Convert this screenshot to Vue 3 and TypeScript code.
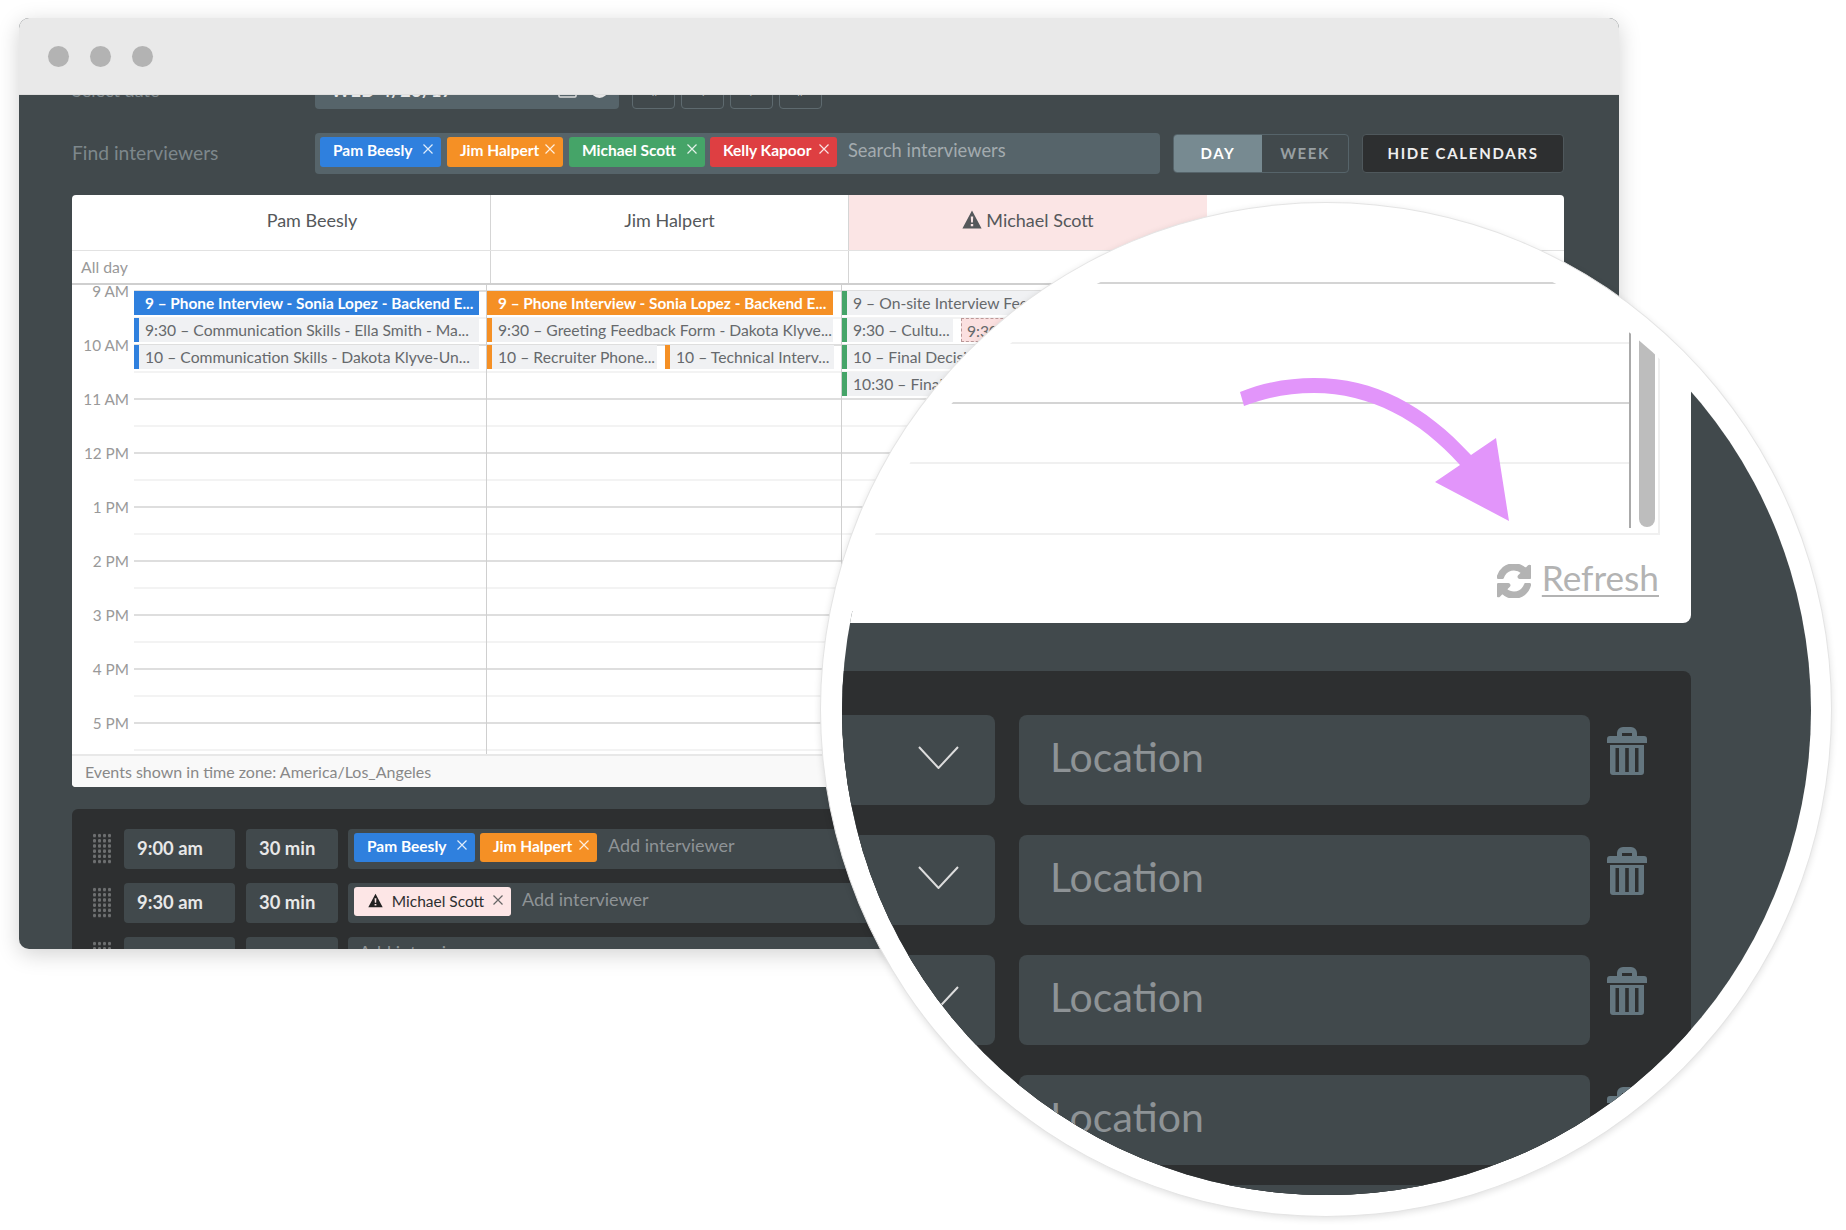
<script setup lang="ts">
interface Chip { name: string; color: string }
interface Ev { text: string; kind: string; width?: number }

const topChips: Chip[] = [
  { name: 'Pam Beesly', color: 'blue' },
  { name: 'Jim Halpert', color: 'orange' },
  { name: 'Michael Scott', color: 'green' },
  { name: 'Kelly Kapoor', color: 'red' },
]
const hours = ['9 AM', '10 AM', '11 AM', '12 PM', '1 PM', '2 PM', '3 PM', '4 PM', '5 PM']
const col1: Ev[][] = [
  [{ text: '9 – Phone Interview - Sonia Lopez - Backend E...', kind: 'solid blue' }],
  [{ text: '9:30 – Communication Skills - Ella Smith - Ma...', kind: 'bar blue' }],
  [{ text: '10 – Communication Skills - Dakota Klyve-Un...', kind: 'bar blue' }],
]
const col2: Ev[][] = [
  [{ text: '9 – Phone Interview - Sonia Lopez - Backend E...', kind: 'solid orange' }],
  [{ text: '9:30 – Greeting Feedback Form - Dakota Klyve...', kind: 'bar orange' }],
  [
    { text: '10 – Recruiter Phone...', kind: 'bar orange', width: 170 },
    { text: '10 – Technical Interv...', kind: 'bar orange', width: 169 },
  ],
]
const col3: Ev[][] = [
  [{ text: '9 – On-site Interview Feedback', kind: 'bar green' }],
  [
    { text: '9:30 – Cultu...', kind: 'bar green', width: 111 },
    { text: '9:30 – Hold', kind: 'hold', width: 111 },
  ],
  [{ text: '10 – Final Decision', kind: 'bar green' }],
  [{ text: '10:30 – Final Review', kind: 'bar green' }],
]
const schedule = [
  { time: '9:00 am', chips: [topChips[0], topChips[1]] as Chip[], warn: false },
  { time: '9:30 am', chips: [] as Chip[], warn: true },
  { time: '10:00 am', chips: [] as Chip[], warn: false },
]
const lensRows = [1, 2, 3, 4]
const arrow =
  'M1240 392C1265 382 1290 378 1314 378C1375 378 1425 405 1471 455L1496 438L1509 521L1435 482L1460 465C1420 420 1370 393 1314 393C1290 393 1268 397 1244 406Z'
const refresh =
  'M1639 1056q0 5-1 7-64 268-268 434.5t-478 166.5q-146 0-282.5-55t-243.5-157l-129 129q-19 19-45 19t-45-19-19-45v-448q0-26 19-45t45-19h448q26 0 45 19t19 45-19 45l-137 137q71 66 161 102t187 36q134 0 250-65t186-179q11-17 53-117 8-23 30-23h192q13 0 22.5 9.5t9.5 22.5zm25-800v448q0 26-19 45t-45 19h-448q-26 0-45-19t-19-45 19-45l138-138q-148-137-349-137-134 0-250 65t-186 179q-11 17-53 117-8 23-30 23h-199q-13 0-22.5-9.5t-9.5-22.5v-7q65-268 270-434.5t480-166.5q146 0 284 55.5t245 156.5l130-129q19-19 45-19t45 19 19 45z'
const warnPath = 'M10 0.5L19.6 18.5H0.4ZM8.8 6.5H11.2L10.9 12.5H9.1ZM8.8 14H11.2V16.3H8.8Z'
const trash =
  'M10 9V6a6 6 0 0 1 6-6h8a6 6 0 0 1 6 6v3h7a3 3 0 0 1 3 3v4H0v-4a3 3 0 0 1 3-3zM15 6v3h10V6zM3 18H37V45a3 3 0 0 1-3 3H6a3 3 0 0 1-3-3zM8.5 21V45H12V21zM18.2 21V45H21.8V21zM28 21V45H31.5V21z'
</script>

<template>
  <div class="page">
    <div class="window">
      <div class="titlebar">
        <span class="dot"></span><span class="dot"></span><span class="dot"></span>
      </div>
      <div class="body">
        <div class="clipped-row">
          <div class="row-label cut">Select date</div>
          <div class="date-field">
            <span>WED 4/26/17</span>
            <span class="date-icons">
              <svg width="19" height="14" viewBox="0 0 19 14"><rect x="1" y="1" width="17" height="12" rx="1" fill="none" stroke="#ddd" stroke-width="1.5" /></svg>
              <i class="clock"></i>
            </span>
          </div>
          <div class="nav-btns">
            <span class="nav-btn">«</span><span class="nav-btn">‹</span><span class="nav-btn">›</span><span class="nav-btn">»</span>
          </div>
        </div>

        <div class="find-row">
          <div class="row-label">Find interviewers</div>
          <div class="chip-bar">
            <span v-for="c in topChips" :key="c.name" class="chip" :class="c.color">
              {{ c.name }}
              <svg class="x" width="10" height="10" viewBox="0 0 10 10"><path d="M0.5 0.5L9.5 9.5M9.5 0.5L0.5 9.5" /></svg>
            </span>
            <span class="search-ph">Search interviewers</span>
          </div>
          <div class="toggle">
            <span class="tog on">DAY</span><span class="tog">WEEK</span>
          </div>
          <div class="hide-btn">HIDE CALENDARS</div>
        </div>

        <div class="calendar">
          <div class="cal-head">
            <div class="hc h1">Pam Beesly</div>
            <div class="hc h2">Jim Halpert</div>
            <div class="hc h3">
              <svg width="20" height="19" viewBox="0 0 20 19"><path :d="warnPath" fill="#55585b" fill-rule="evenodd" /></svg>
              Michael Scott
            </div>
          </div>
          <div class="cal-allday">
            <div class="ad a1">All day</div>
            <div class="ad a2"></div>
            <div class="ad a3"></div>
          </div>
          <div class="cal-grid">
            <div class="times">
              <div v-for="h in hours" :key="h" class="time">{{ h }}</div>
            </div>
            <div class="lanes">
              <div class="lane l1">
                <div v-for="(row, i) in col1" :key="i" class="ev-row">
                  <div v-for="e in row" :key="e.text" class="ev" :class="e.kind">{{ e.text }}</div>
                </div>
              </div>
              <div class="lane l2">
                <div v-for="(row, i) in col2" :key="i" class="ev-row">
                  <div v-for="e in row" :key="e.text" class="ev" :class="e.kind" :style="e.width ? { flex: `0 0 ${e.width}px` } : undefined">{{ e.text }}</div>
                </div>
              </div>
              <div class="lane l3">
                <div v-for="(row, i) in col3" :key="i" class="ev-row">
                  <div v-for="e in row" :key="e.text" class="ev" :class="e.kind" :style="e.width ? { flex: `0 0 ${e.width}px` } : undefined">{{ e.text }}</div>
                </div>
              </div>
            </div>
          </div>
          <div class="cal-foot">Events shown in time zone: America/Los_Angeles</div>
        </div>

        <div class="schedule">
          <div v-for="r in schedule" :key="r.time" class="s-row">
            <span class="grip"></span>
            <div class="s-field s-time">{{ r.time }}</div>
            <div class="s-field s-dur">30 min</div>
            <div class="s-field s-people">
              <span v-for="c in r.chips" :key="c.name" class="chip small" :class="c.color">
                {{ c.name }}
                <svg class="x" width="10" height="10" viewBox="0 0 10 10"><path d="M0.5 0.5L9.5 9.5M9.5 0.5L0.5 9.5" /></svg>
              </span>
              <span v-if="r.warn" class="chip small warn">
                <svg width="15" height="15" viewBox="0 0 20 19"><path :d="warnPath" fill="#222" fill-rule="evenodd" /></svg>
                Michael Scott
                <svg class="x" width="10" height="10" viewBox="0 0 10 10"><path d="M0.5 0.5L9.5 9.5M9.5 0.5L0.5 9.5" /></svg>
              </span>
              <span class="add-ph">Add interviewer</span>
            </div>
          </div>
        </div>
      </div>
    </div>

    <div class="lens">
      <div class="lens-inner">
        <div class="l-card">
          <div class="l-grid">
            <div v-for="n in 4" :key="n" class="l-line" :class="{ strong: n % 2 === 1 }"></div>
            <span class="l-vline"></span>
            <span class="l-track"></span>
            <span class="l-thumb"></span>
          </div>
          <div class="l-refresh">
            <svg class="l-ref-icon" width="34" height="34" viewBox="128 128 1536 1536"><path :d="refresh" fill="#b3b3b3" stroke="#b3b3b3" stroke-width="70" /></svg>
            <span class="l-ref-text">Refresh</span>
          </div>
          <svg class="l-arrow" width="290" height="160" viewBox="1230 370 290 160"><path :d="arrow" fill="#e295fa" /></svg>
        </div>
        <div class="l-panel">
          <div v-for="n in lensRows" :key="n" class="l-row">
            <div class="l-select">
              <svg class="l-chev" width="41" height="23" viewBox="0 0 41 23"><path d="M1 1L20.5 22L40 1" fill="none" stroke="#dcdcdc" stroke-width="2" /></svg>
            </div>
            <div class="l-loc">Location</div>
            <svg class="l-trash" width="40" height="48" viewBox="0 0 40 48"><path :d="trash" fill="#64767f" fill-rule="evenodd" /></svg>
          </div>
          <div class="l-next"></div>
        </div>
      </div>
    </div>
  </div>
</template>

<style>
html, body { margin: 0; background: #fff; }
</style>

<style scoped>
.page {
  position: relative;
  width: 1846px;
  height: 1230px;
  overflow: hidden;
  background: #fff;
  font-family: Lato, "Open Sans", sans-serif;
  padding: 18px 0 0 19px;
  box-sizing: border-box;
}
.window {
  width: 1600px;
  height: 931px;
  border-radius: 10px;
  overflow: hidden;
  background: #41494c;
  box-shadow: 0 5px 22px rgba(0, 0, 0, .18);
  display: flex;
  flex-direction: column;
}
.titlebar {
  height: 77px;
  flex: none;
  background: #e9e9e9;
  border-bottom: 1px solid #dedede;
  display: flex;
  align-items: center;
  gap: 21px;
  padding-left: 29px;
  box-sizing: border-box;
}
.dot { width: 21px; height: 21px; border-radius: 50%; background: #b3b3b3; }
.body { padding: 0 55px 0 53px; flex: 1; min-height: 0; }
.clipped-row {
  height: 14px;
  display: flex;
  align-items: flex-end;
  overflow: hidden;
}
.row-label { width: 243px; flex: none; color: #7d878b; font-size: 19.3px; padding-bottom: 2px; box-sizing: border-box; }
.row-label.cut {
  align-self: flex-start;
  height: 20px;
  line-height: 20px;
  margin-top: -15px;
  padding-bottom: 0;
  font-size: 18px;
}
.date-field {
  width: 304px;
  height: 40px;
  flex: none;
  background: #56646a;
  border-radius: 4px;
  color: #e6e6e6;
  font-size: 18px;
  font-weight: 700;
  letter-spacing: .5px;
  padding: 10px 11px 0 16px;
  box-sizing: border-box;
  display: flex;
  justify-content: space-between;
}
.date-icons { display: flex; gap: 14px; margin-top: 2px; height: 17px; align-items: flex-end; }
.clock { width: 17px; height: 17px; border-radius: 50%; background: #e6e6e6; display: block; }
.nav-btns { display: flex; gap: 6px; margin-left: 13px; }
.nav-btn {
  width: 43px;
  height: 40px;
  box-sizing: border-box;
  border: 1px solid #5e6a6f;
  border-radius: 4px;
  color: #bbb;
  text-align: center;
  font-size: 18px;
  line-height: 40px;
}
.find-row {
  margin-top: 24px;
  height: 40px;
  display: flex;
  align-items: center;
}
.chip-bar {
  width: 845px;
  height: 41px;
  flex: none;
  box-sizing: border-box;
  background: #56646a;
  border-radius: 4px;
  padding: 4px 5px;
  display: flex;
  gap: 6px;
  align-items: flex-start;
}
.chip {
  height: 30px;
  padding: 0 8px 3px 13px;
  border-radius: 3px;
  box-sizing: border-box;
  color: #fff;
  font-size: 15.5px;
  font-weight: 700;
  display: inline-flex;
  align-items: center;
  justify-content: space-between;
  gap: 5px;
  white-space: nowrap;
  flex: none;
}
.chip .x { stroke: rgba(255, 255, 255, .85); stroke-width: 1.2; margin-top: -2px; }
.chip.blue { background: #2f80de; width: 121px; }
.chip.orange { background: #f59025; width: 116px; }
.chip.green { background: #45a468; width: 136px; }
.chip.red { background: #de3f42; width: 127px; margin-left: -1px; }
.chip.small.blue { width: 121px; }
.chip.small.orange { width: 117px; }
.chip.small { height: 29px; }
.chip.warn {
  width: 157px;
  background: #fde6e6;
  color: #2d2f30;
  font-weight: 400;
  padding: 0 8px 2px 14px;
  gap: 5px;
}
.chip.warn .x { stroke: #666; }
.search-ph { color: #a3abaf; font-size: 18.3px; margin: 2px 0 0 5px; }
.toggle {
  margin-left: 13px;
  width: 176px;
  height: 39px;
  flex: none;
  display: flex;
  border: 1px solid #56646a;
  box-sizing: border-box;
  border-radius: 4px;
  overflow: hidden;
}
.tog {
  flex: 1;
  color: #989fa2;
  font-size: 15px;
  font-weight: 700;
  letter-spacing: 1.6px;
  display: flex;
  align-items: center;
  justify-content: center;
}
.tog.on { flex: 0 0 88px; background: #778a91; color: #fff; }
.hide-btn {
  margin-left: 13px;
  width: 202px;
  height: 39px;
  flex: none;
  background: #2d2f30;
  border: 1px solid #4f585c;
  box-sizing: border-box;
  border-radius: 4px;
  color: #f0f0f0;
  font-size: 15px;
  font-weight: 700;
  letter-spacing: 1.7px;
  display: flex;
  align-items: center;
  justify-content: center;
}
.calendar {
  margin-top: 22px;
  height: 592px;
  background: #fff;
  border-radius: 4px;
  overflow: hidden;
  display: flex;
  flex-direction: column;
}
.cal-head { height: 56px; flex: none; display: flex; border-bottom: 1px solid #e2e2e2; box-sizing: border-box; }
.hc {
  display: flex;
  align-items: center;
  justify-content: center;
  gap: 4px;
  color: #55585b;
  font-size: 18px;
  padding-bottom: 6px;
  box-sizing: border-box;
}
.h1 { width: 419px; border-right: 1px solid #d5d5d5; padding-left: 62px; }
.h2 { width: 358px; border-right: 1px solid #d5d5d5; }
.h3 { width: 358px; background: #fbe5e5; }
.cal-allday { height: 32px; flex: none; display: flex; box-sizing: border-box; }
.ad { color: #999; font-size: 15.8px; display: flex; align-items: center; padding: 0 0 1px 9px; box-sizing: border-box; }
.a1 { width: 419px; border-right: 1px solid #d5d5d5; }
.a2 { width: 358px; border-right: 1px solid #d5d5d5; }
.a3 { width: 358px; border-right: 1px solid #d5d5d5; }
.cal-grid {
  flex: 1;
  min-height: 0;
  display: flex;
  overflow: hidden;
  border-top: 2px solid #cfcfcf;
}
.times { width: 62px; flex: none; margin-top: -21px; }
.time {
  height: 54px;
  display: flex;
  align-items: center;
  justify-content: flex-end;
  padding-right: 5px;
  box-sizing: border-box;
  color: #999;
  font-size: 15.3px;
}
.lanes {
  flex: 1;
  display: flex;
  background-image: linear-gradient(
    to bottom,
    transparent 0,
    transparent 5px,
    #dedede 5px,
    #dedede 7px,
    transparent 7px,
    transparent 32px,
    #f3f3f3 32px,
    #f3f3f3 34px,
    transparent 34px
  );
  background-size: 100% 54px;
  background-repeat: repeat-y;
}
.lane { padding-top: 6px; box-sizing: border-box; display: flex; flex-direction: column; gap: 3px; flex: none; }
.l1 { width: 353px; padding-right: 7px; border-right: 1px solid #cfcfcf; }
.l2 { width: 355px; padding-right: 8px; border-right: 1px solid #cfcfcf; }
.l3 { width: 360px; }
.ev-row { display: flex; gap: 8px; height: 24px; }
.ev {
  flex: 1;
  min-width: 0;
  box-sizing: border-box;
  height: 24px;
  line-height: 24px;
  font-size: 15.7px;
  color: #66696c;
  background: #f0f1f3;
  padding-left: 6px;
  white-space: nowrap;
  overflow: hidden;
}
.ev.solid { color: #fff; font-weight: 700; padding-left: 11px; font-size: 15.4px; }
.ev.solid.blue { background: #2f80de; }
.ev.solid.orange { background: #f59025; }
.ev.bar.blue { border-left: 5px solid #2f80de; }
.ev.bar.orange { border-left: 5px solid #f59025; }
.ev.bar.green { border-left: 5px solid #45a468; }
.ev.hold { background: #fbe0e0; border: 1px dashed #b99; padding-left: 5px; line-height: 24px; }
.cal-foot {
  height: 33px;
  flex: none;
  box-sizing: border-box;
  border-top: 2px solid #e8e8e8;
  background: #f9f9f9;
  color: #888;
  font-size: 16px;
  display: flex;
  align-items: center;
  padding: 0 0 1px 13px;
}
.schedule {
  margin-top: 22px;
  height: 160px;
  background: #2d2f30;
  border-radius: 6px 6px 0 0;
  padding: 20px 0 0 20px;
  box-sizing: border-box;
  display: flex;
  flex-direction: column;
  gap: 14px;
}
.s-row { display: flex; height: 40px; flex: none; align-items: flex-start; }
.grip {
  width: 19px;
  height: 31px;
  margin: 4px 13px 0 0;
  flex: none;
  background-image: radial-gradient(circle, #6d6f70 1.5px, transparent 1.9px);
  background-size: 5px 5.2px;
}
.s-field {
  height: 40px;
  box-sizing: border-box;
  background: #41494c;
  border-radius: 4px;
  color: #e8e8e8;
  font-size: 18.4px;
  display: flex;
  align-items: center;
}
.s-time { width: 111px; padding: 0 0 3px 13px; font-weight: 700; }
.s-dur { width: 92px; margin-left: 11px; padding: 0 0 3px 13px; font-weight: 700; }
.s-people { width: 600px; margin-left: 10px; padding: 4px 6px; gap: 5px; align-items: flex-start; }
.add-ph { color: #8e9396; font-size: 18px; font-weight: 400; margin: 0 0 0 6px; white-space: nowrap; line-height: 24px; }
.s-row:nth-child(3) .add-ph { margin: 0 0 0 5px; line-height: 22px; }

.lens {
  position: absolute;
  left: 820px;
  top: 202px;
  width: 1012px;
  height: 1015px;
  box-sizing: border-box;
  border-radius: 50%;
  background: #fff;
  border: 1px solid #e4e4e4;
  box-shadow: 0 2px 7px rgba(0, 0, 0, .12);
  padding: 23px 20px 21px 21px;
}
.lens-inner {
  width: 969px;
  height: 969px;
  border-radius: 50%;
  overflow: hidden;
  background:
    linear-gradient(#41494c, #41494c) 849px 0 / 120px 397px no-repeat,
    linear-gradient(#41494c, #41494c) 0 385px / 100% 584px no-repeat,
    #fff;
}
.l-card {
  position: relative;
  width: 849px;
  height: 397px;
  box-sizing: border-box;
  background: #fff;
  border-radius: 0 0 8px 0;
  padding-top: 56px;
}
.l-grid {
  position: relative;
  width: 818px;
  height: 253px;
  box-sizing: border-box;
  border-bottom: 2px solid #f0f0f0;
}
.l-line { height: 60px; width: 787px; border-top: 2px solid #f0f0f0; box-sizing: border-box; }
.l-line.strong { border-top-color: #d4d4d4; }
.l-vline { position: absolute; left: 787px; top: 0; width: 2px; height: 246px; background: #aaa; }
.l-track { position: absolute; left: 816px; top: 0; width: 2px; height: 251px; background: #efefef; }
.l-thumb { position: absolute; left: 797px; top: 0; width: 16px; height: 245px; background: #bdbdbd; border-radius: 0 0 8px 8px; }
.l-refresh {
  display: flex;
  justify-content: flex-end;
  align-items: center;
  gap: 11px;
  padding-right: 32px;
  margin-top: 21px;
}
.l-ref-icon { margin-top: 8px; }
.l-ref-text { color: #b3b3b3; font-size: 35.2px; line-height: 40px; text-decoration: underline; text-decoration-thickness: 2px; text-underline-offset: 4px; }
.l-arrow { position: absolute; left: 388px; top: 144px; }
.l-panel {
  margin-top: 48px;
  width: 849px;
  height: 600px;
  background: #2d2f30;
  border-radius: 0 8px 0 0;
  padding-top: 44px;
  box-sizing: border-box;
  display: flex;
  flex-direction: column;
  gap: 30px;
}
.l-row { height: 90px; flex: none; display: flex; align-items: flex-start; }
.l-select {
  width: 153px;
  height: 90px;
  flex: none;
  background: #41494c;
  border-radius: 0 8px 8px 0;
  display: flex;
  justify-content: flex-end;
  align-items: center;
  padding-right: 36px;
  box-sizing: border-box;
}
.l-chev { margin-bottom: 5px; }
.l-loc {
  width: 571px;
  height: 90px;
  flex: none;
  margin-left: 24px;
  background: #41494c;
  border-radius: 8px;
  color: #8e9396;
  font-size: 41px;
  display: flex;
  align-items: center;
  padding: 0 0 8px 31px;
  box-sizing: border-box;
}
.l-trash { margin: 12px 0 0 17px; flex: none; }
.l-next { height: 40px; width: 748px; background: #41494c; flex: none; margin-top: -10px; }
</style>
